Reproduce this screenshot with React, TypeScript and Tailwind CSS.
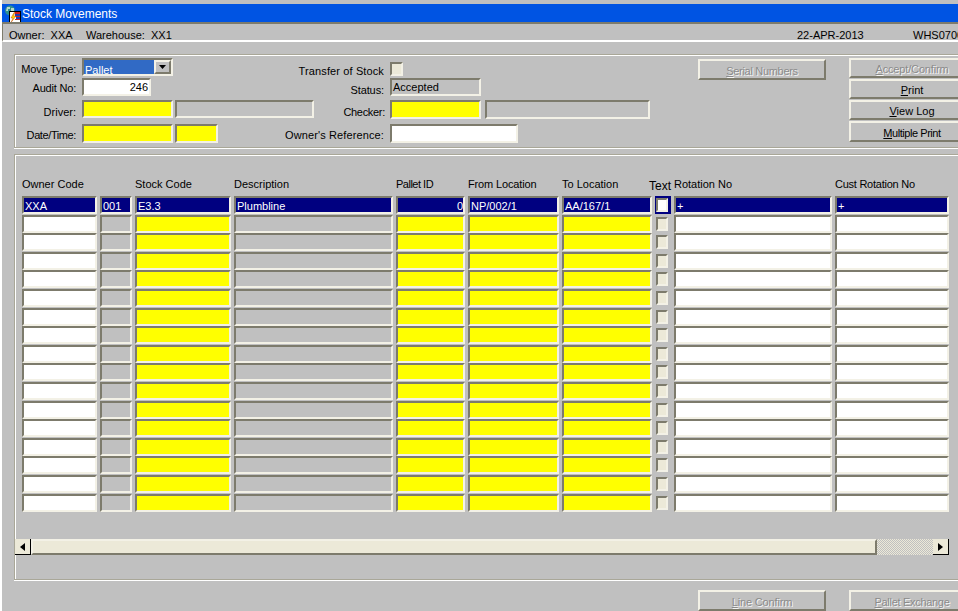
import type { ReactNode } from "react";

// sunken and raised win32 style bevels
const sunken = "border-2 border-t-[#7d7b6c] border-l-[#7d7b6c] border-r-[#f3f1e6] border-b-[#f3f1e6]";
const raised = "border-2 border-t-[#f3f1e6] border-l-[#f3f1e6] border-r-[#7d7b6c] border-b-[#7d7b6c]";
const etched = "border-t border-l border-b border-t-[#a9a798] border-l-[#a9a798] border-b-[#a9a798]";

const gridCols = "grid grid-cols-[75px_32px_96px_159px_69px_91px_90px_16px_158px_114px] gap-x-[3px]";

const blankRows = Array.from({ length: 16 }, (_, i) => i);

function Field({ className, children }: { className: string; children?: ReactNode }) {
  return (
    <div className={`${sunken} flex items-center overflow-hidden whitespace-nowrap pl-px ${className}`}>
      {children}
    </div>
  );
}

function Label({ className, children }: { className: string; children: ReactNode }) {
  return <div className={`flex shrink-0 justify-end whitespace-nowrap ${className}`}>{children}</div>;
}

function Btn({ k, rest, disabled, className }: { k: string; rest: string; disabled?: boolean; className: string }) {
  return (
    <div
      className={`${raised} flex shrink-0 items-center justify-center whitespace-nowrap pt-[2px] ${
        disabled ? "text-[#8b8b8b] [text-shadow:1px_1px_0_#f4f4f4]" : "text-black"
      } ${className}`}
    >
      <span>
        <u>{k}</u>
        {rest}
      </span>
    </div>
  );
}

function AppIcon() {
  return (
    <svg width="18" height="18" viewBox="0 0 18 18" className="shrink-0">
      <circle cx="6" cy="5.5" r="5" fill="#2f8f8f" />
      <path d="M3 2h3v2H4v2H2zM7 3h3v3H7z" fill="#b8d8c8" />
      <rect x="5.5" y="6.5" width="11" height="11" fill="#fff" stroke="#000" />
      <path d="M11 7h5v2h-5zM11 11h5v1h-5zM11 14h5v1h-5z" fill="#d02020" />
      <path d="M11 9h5v2h-5zM12 12h4v2h-4z" fill="#2040b0" />
      <path d="M10 7.5 7 13h2l-2 4.5 5-6.5H9.5l1.5-3.5z" fill="#ffd800" stroke="#c03000" strokeWidth="0.4" />
    </svg>
  );
}

function Row({ cells, check }: { cells: string[]; check: string }) {
  return (
    <div className={`${gridCols} h-[18.6px]`}>
      {cells.map((c, i) =>
        i === 7 ? (
          <div key={i} className="flex items-start pl-px pt-[2px]">
            <div className={`${sunken} h-[14px] w-[12px] ${check}`} />
          </div>
        ) : (
          <div key={i} className={`${sunken} h-[18px] ${c}`} />
        )
      )}
    </div>
  );
}

export default function App() {
  const selected = [
    { t: "XXA" },
    { t: "001" },
    { t: "E3.3" },
    { t: "Plumbline" },
    { t: "0", right: true },
    { t: "NP/002/1" },
    { t: "AA/167/1" },
    null,
    { t: "+" },
    { t: "+" },
  ];
  const blank = [
    "bg-white",
    "bg-[#c0c0c0]",
    "bg-[#ffff00]",
    "bg-[#c0c0c0]",
    "bg-[#ffff00]",
    "bg-[#ffff00]",
    "bg-[#ffff00]",
    "",
    "bg-white",
    "bg-white",
  ];

  return (
    <div className="flex h-[611px] w-[958px] flex-col overflow-hidden border-l-2 border-white bg-[#c0c0c0] pt-1 font-['Liberation_Sans',Arial,sans-serif] text-[11px] leading-[14px] text-black">
      {/* Title bar */}
      <div className="flex h-[18px] shrink-0 items-center bg-[#0054e3] pl-[2px] pt-[1px] text-[12px] text-white">
        <AppIcon />
        <span>Stock Movements</span>
      </div>

      {/* Owner strip */}
      <div className="flex h-[20px] shrink-0 items-start overflow-hidden whitespace-nowrap border-t-2 border-l border-b-2 border-t-[#7d7b6c] border-l-[#7d7b6c] border-b-white pl-[6px] pt-[4px] text-[11px]">
        <span className="w-[77px] shrink-0">Owner:&nbsp; XXA</span>
        <span className="w-[711px] shrink-0">Warehouse:&nbsp; XX1</span>
        <span className="w-[116px] shrink-0">22-APR-2013</span>
        <span className="shrink-0">WHS0700</span>
      </div>

      {/* Header form */}
      <div className={`${etched} ml-3 mt-3 flex h-[94px] shrink-0 shadow-[inset_1px_1px_0_#fff,0_1px_0_#fff]`}>
        <div className="flex w-[683px] shrink-0 flex-col pt-[3px]">
          <div className="flex h-[18px] items-center">
            <Label className="w-[61px] pt-[4px] tracking-[-0.2px]">Move Type:</Label>
            <div className={`${sunken} relative ml-[6px] flex h-[18px] w-[91px] overflow-hidden bg-[#316ac5] text-white`}>
              <span className="mt-[3px] pl-px">Pallet</span>
              <div className={`${raised} absolute right-0 top-0 flex h-[14px] w-[17px] items-center justify-center bg-[#c0c0c0]`}>
                <svg width="7" height="4" viewBox="0 0 7 4">
                  <path d="M0 0h7L3.5 4z" fill="#000" />
                </svg>
              </div>
            </div>
            <Label className="ml-[211px] w-[0px] pt-[8px] tracking-[0.12px]">Transfer of Stock</Label>
            <div className={`${sunken} ml-[6px] mt-[4px] h-[14px] w-[13px] bg-[#ece9d8]`} />
          </div>
          <div className="mt-[2px] flex h-[18px] items-center">
            <Label className="w-[61px] pt-[2px] tracking-[-0.2px]">Audit No:</Label>
            <Field className="ml-[6px] h-[18px] w-[69px] justify-end bg-white pr-[1px]">246</Field>
            <Label className="ml-[233px] w-[0px] pt-[6px] tracking-[-0.1px]">Status:</Label>
            <Field className="ml-[6px] h-[18px] w-[91px] bg-[#c0c0c0]">Accepted</Field>
          </div>
          <div className="mt-[4px] flex h-[18px] items-center">
            <Label className="w-[61px] pt-[6px]">Driver:</Label>
            <Field className="ml-[6px] h-[18px] w-[91px] bg-[#ffff00]" />
            <Field className="ml-[2px] h-[18px] w-[139px] bg-[#c0c0c0]" />
            <Label className="ml-[71px] w-[0px] pt-[6px] tracking-[-0.3px]">Checker:</Label>
            <Field className="ml-[5px] h-[19px] w-[91px] bg-[#ffff00]" />
            <Field className="ml-[4px] h-[19px] w-[165px] bg-[#c0c0c0]" />
          </div>
          <div className="mt-[6px] flex h-[19px] items-center">
            <Label className="w-[61px] pt-[2px] tracking-[-0.4px]">Date/Time:</Label>
            <Field className="ml-[6px] h-[19px] w-[91px] bg-[#ffff00]" />
            <Field className="ml-[2px] h-[19px] w-[43px] bg-[#ffff00]" />
            <Label className="ml-[166px] w-[0px] pt-[2px] tracking-[0.12px]">Owner's Reference:</Label>
            <Field className="ml-[6px] h-[19px] w-[128px] bg-white" />
          </div>
        </div>
        <div className="pt-1">
          <Btn k="S" rest="erial Numbers" disabled className="h-[21px] w-[128px] tracking-[-0.3px]" />
        </div>
        <div className="ml-[23px] flex flex-col gap-[1px] pt-[3px]">
          <Btn k="A" rest="ccept/Confirm" disabled className="h-[20px] w-[126px] tracking-[-0.15px]" />
          <Btn k="P" rest="rint" className="h-[20px] w-[126px]" />
          <Btn k="V" rest="iew Log" className="h-[20px] w-[126px]" />
          <Btn k="M" rest="ultiple Print" className="h-[21px] w-[126px] tracking-[-0.45px]" />
        </div>
      </div>

      {/* Lines block */}
      <div className={`${etched} ml-3 mt-[6px] flex h-[426px] shrink-0 flex-col pt-[22px] shadow-[inset_1px_1px_0_#fff,0_1px_0_#fff]`}>
        <div className={`${gridCols} ml-[7px] h-[19px] whitespace-nowrap`}>
          <span>Owner Code</span>
          <span />
          <span>Stock Code</span>
          <span>Description</span>
          <span className="tracking-[-0.5px]">Pallet ID</span>
          <span className="tracking-[-0.15px]">From Location</span>
          <span>To Location</span>
          <span className="-ml-[6px] mt-[2px] text-[12px]">Text</span>
          <span>Rotation No</span>
          <span className="tracking-[-0.25px]">Cust Rotation No</span>
        </div>

        <div className="ml-[7px] flex flex-col">
          <div className={`${gridCols} h-[18.6px]`}>
            {selected.map((c, i) =>
              c ? (
                <Field key={i} className={`h-[18px] bg-[#000080] pt-[2px] text-white ${c.right ? "justify-end" : ""}`}>
                  {c.t}
                </Field>
              ) : (
                <div key={i} className="flex h-[18px] items-center bg-[#000080] pl-px">
                  <div className={`${sunken} h-[14px] w-[12px] bg-white`} />
                </div>
              )
            )}
          </div>
          {blankRows.map((r) => (
            <Row key={r} cells={blank} check="bg-[#ece9d8]" />
          ))}
        </div>

        {/* Horizontal scrollbar */}
        <div className="mt-[27px] flex h-[16px] w-[934px]">
          <div className="flex w-[16px] shrink-0 items-center justify-center border-r border-b border-black bg-[#ece9d8]">
            <svg width="5" height="8" viewBox="0 0 5 8">
              <path d="M5 0v8L0 4z" fill="#000" />
            </svg>
          </div>
          <div className={`${raised} w-[846px] shrink-0 bg-[#ece9d8]`} />
          <div className="flex-1 bg-[#d8d8d0] bg-[repeating-conic-gradient(#ece9d8_0_25%,#c0c0c0_0_50%)] bg-[length:2px_2px]" />
          <div className="flex w-[16px] shrink-0 items-center justify-center border-r border-b border-black bg-[#ece9d8]">
            <svg width="5" height="8" viewBox="0 0 5 8">
              <path d="M0 0v8l5-4z" fill="#000" />
            </svg>
          </div>
        </div>
      </div>

      {/* Bottom buttons */}
      <div className="ml-[696px] mt-[10px] flex gap-[23px]">
        <Btn k="L" rest="ine Confirm" disabled className="h-[21px] w-[128px] tracking-[-0.15px]" />
        <Btn k="P" rest="allet Exchange" disabled className="h-[21px] w-[126px] tracking-[-0.3px]" />
      </div>
    </div>
  );
}
